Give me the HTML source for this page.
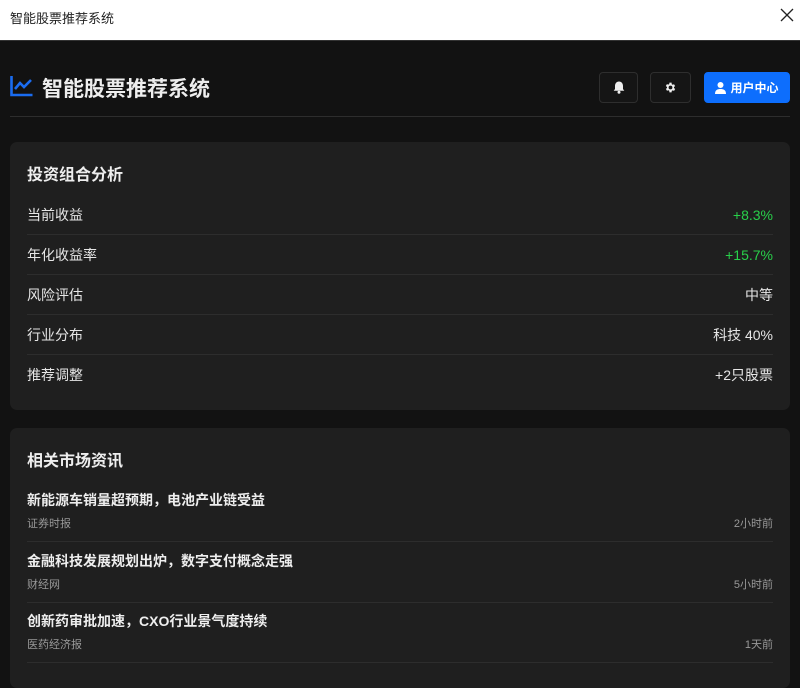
<!DOCTYPE html><html><head><meta charset="utf-8"><style>
*{margin:0;padding:0;box-sizing:border-box}
body{width:800px;height:673px;overflow:hidden;background:#121212;font-family:"Liberation Sans","Noto Sans CJK SC",sans-serif;color:#e6e6e6;position:relative}
.tb{position:absolute;left:0;top:0;width:800px;height:41px;background:#fff;border-bottom:1px solid #333}
.tb span{position:absolute;left:10px;top:8px;font-size:13px;color:#222}
.tb .x{position:absolute;right:3px;top:5px;width:20px;height:20px}
.abs{position:absolute}
.btn{position:absolute;top:72px;height:31px;border:1px solid #2e2e2e;border-radius:4px;background:#151515;display:flex;align-items:center;justify-content:center}
.card{position:absolute;left:10px;width:780px;background:#1f1f1f;border-radius:7px}
.ct{position:absolute;left:17px;font-size:16px;font-weight:bold;color:#eee}
.row{position:absolute;left:17px;right:17px;height:40px;display:flex;justify-content:space-between;align-items:center;font-size:14px;border-bottom:1px solid #2d2d2d}
.g{color:#28d04a}
.n{position:absolute;left:17px;right:17px;height:52px;border-bottom:1px solid #2d2d2d}
.n b{position:absolute;left:0;top:0;font-size:14px;color:#eee}
.n i{font-style:normal;position:absolute;top:25px;font-size:11px;color:#999}
</style></head><body>
<div class="tb"><span>智能股票推荐系统</span><svg class="x" viewBox="0 0 20 20"><path d="M4 4L16 16M16 4L4 16" stroke="#222" stroke-width="1.3"/></svg></div>
<svg class="abs" style="left:10px;top:75px" width="24" height="22" viewBox="0 0 24 22"><path d="M1.5 1v19h21" stroke="#1a6cf0" stroke-width="2.6" fill="none"/><path d="M5 14l5-6 4 4 7-7" stroke="#1a6cf0" stroke-width="2.6" fill="none"/></svg>
<div class="abs" style="left:42px;top:73px;font-size:21px;font-weight:bold;color:#eee">智能股票推荐系统</div>
<div class="btn" style="left:599px;width:39px"><svg width="12" height="13" viewBox="0 0 12 13"><path d="M6 0.5c-2.5 0-4 2-4 4.5v3L0.7 9.8h10.6L10 8V5C10 2.5 8.5 0.5 6 0.5z" fill="#eee"/><circle cx="6" cy="11.3" r="1.5" fill="#eee"/></svg></div>
<div class="btn" style="left:650px;width:41px"><svg width="13" height="13" viewBox="0 0 24 24"><path fill="#eee" d="M19.4 13a7.5 7.5 0 000-2l2.1-1.6-2-3.5-2.5 1a7.6 7.6 0 00-1.7-1L15 3h-4l-.4 2.7a7.6 7.6 0 00-1.7 1l-2.5-1-2 3.5L6.6 11a7.5 7.5 0 000 2l-2.1 1.6 2 3.5 2.5-1c.5.4 1.1.7 1.7 1L11 21h4l.4-2.7c.6-.3 1.2-.6 1.7-1l2.5 1 2-3.5zM13 15.5a3.5 3.5 0 110-7 3.5 3.5 0 010 7z" transform="translate(-1 0)"/></svg></div>
<div class="btn" style="left:704px;width:86px;background:#0d6efd;border-color:#0d6efd;color:#fff;font-size:12px;font-weight:bold"><svg width="11" height="12" viewBox="0 0 11 12" style="margin-right:4px"><circle cx="5.5" cy="3" r="3" fill="#fff"/><path d="M0 12c0-4 2.5-5 5.5-5s5.5 1 5.5 5z" fill="#fff"/></svg>用户中心</div>
<div class="abs" style="left:10px;top:116px;width:780px;height:1px;background:#2d2d2d"></div>
<div class="card" style="top:142px;height:268px">
<div class="ct" style="top:19px">投资组合分析</div>
<div style="position:absolute;left:0;right:0;top:53px">
<div class="row" style="top:0"><span>当前收益</span><span class="g">+8.3%</span></div>
<div class="row" style="top:40px"><span>年化收益率</span><span class="g">+15.7%</span></div>
<div class="row" style="top:80px"><span>风险评估</span><span>中等</span></div>
<div class="row" style="top:120px"><span>行业分布</span><span>科技 40%</span></div>
<div class="row" style="top:160px;border:none"><span>推荐调整</span><span>+2只股票</span></div>
</div></div>
<div class="card" style="top:428px;height:260px">
<div class="ct" style="top:19px">相关市场资讯</div>
<div class="n" style="top:62px"><b>新能源车销量超预期，电池产业链受益</b><i style="left:0">证券时报</i><i style="right:0">2小时前</i></div>
<div class="n" style="top:123px"><b>金融科技发展规划出炉，数字支付概念走强</b><i style="left:0">财经网</i><i style="right:0">5小时前</i></div>
<div class="n" style="top:183px"><b>创新药审批加速，CXO行业景气度持续</b><i style="left:0">医药经济报</i><i style="right:0">1天前</i></div>
</div>
</body></html>
